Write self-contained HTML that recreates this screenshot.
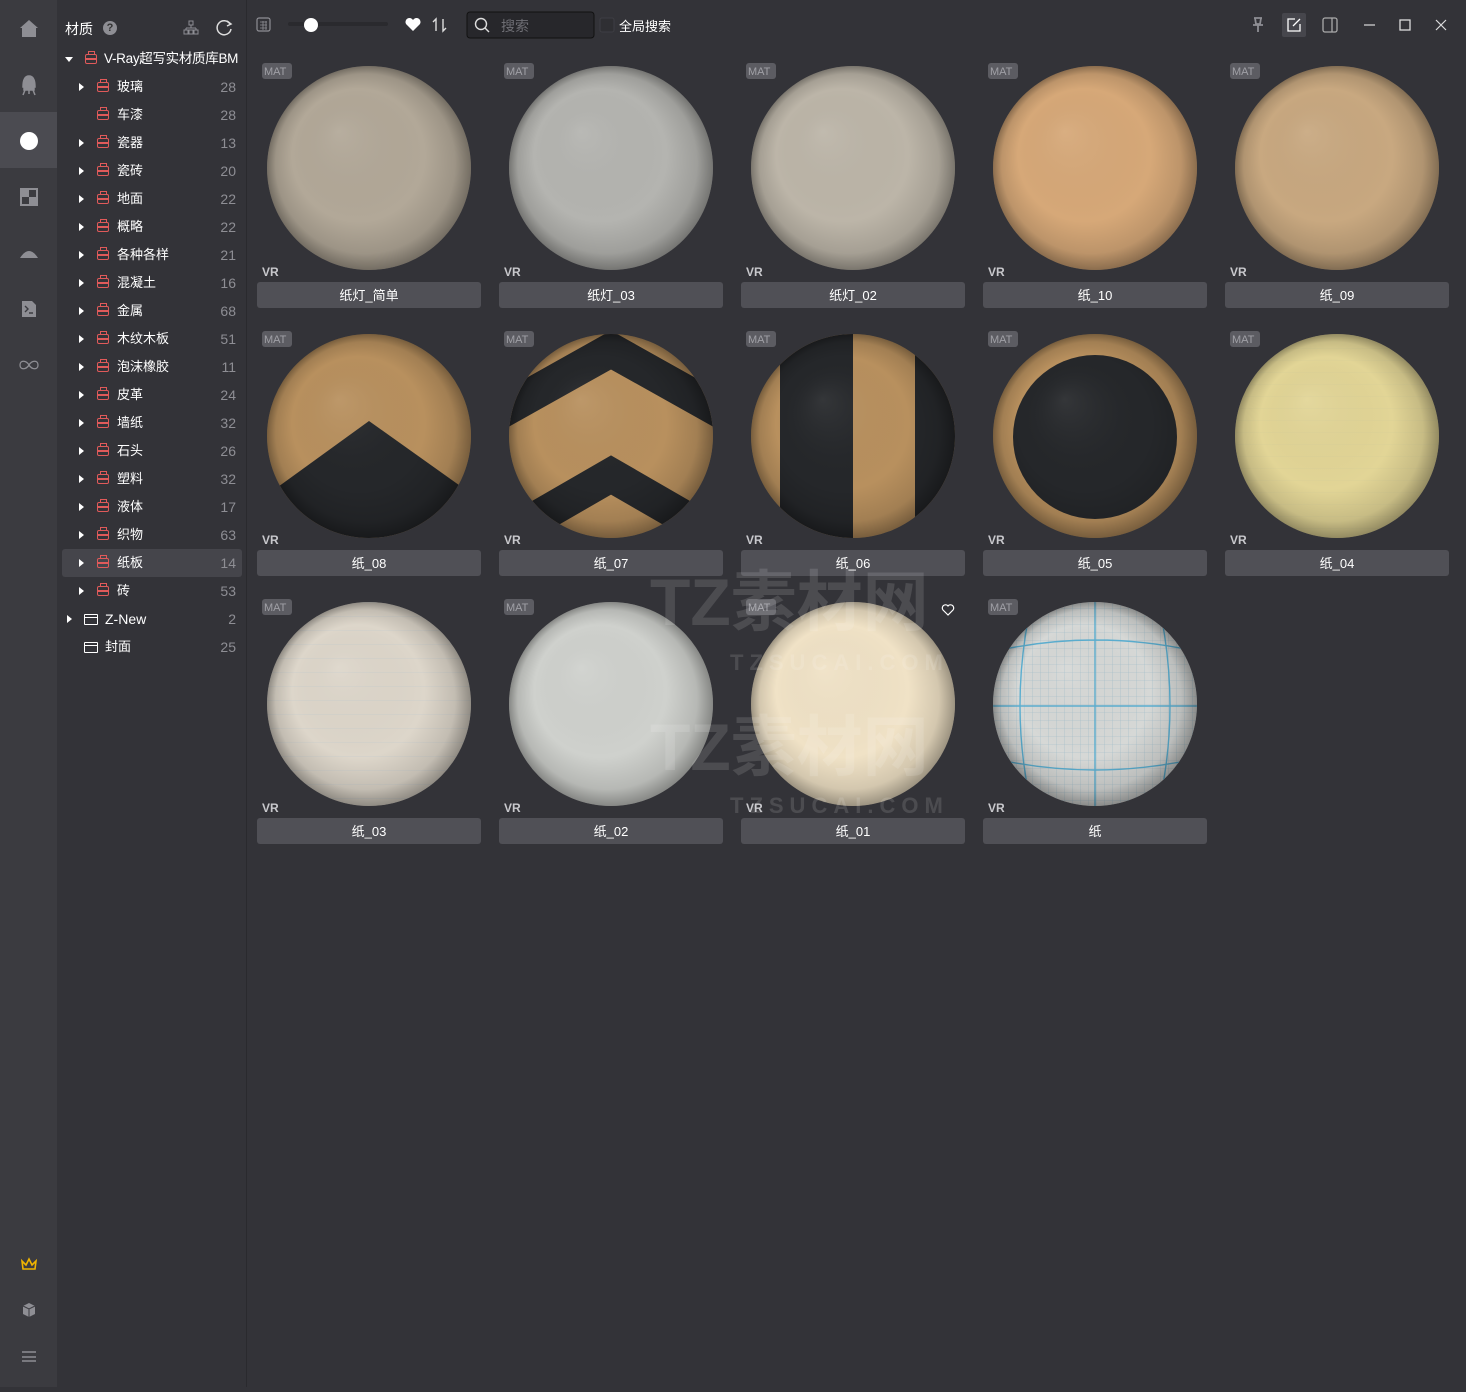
<!DOCTYPE html>
<html><head><meta charset="utf-8"><style>
*{margin:0;padding:0;box-sizing:border-box}
body{width:1466px;height:1387px;background:#333338;font-family:"Liberation Sans","Noto Sans CJK SC",sans-serif;overflow:hidden;position:relative;color:#fff}
#bar{position:absolute;left:0;top:0;width:57px;height:1387px;background:#3b3b40}
#side{position:absolute;left:57px;top:0;width:190px;height:1387px;background:#333338;border-right:1px solid #2a2a2e}
.row{position:absolute;left:5px;width:180px;height:28px;font-size:13px;line-height:28px;white-space:nowrap}
.row .a{position:absolute;left:17px;top:10px;width:0;height:0;border-left:5px solid #fff;border-top:4px solid transparent;border-bottom:4px solid transparent}
.row .ic{position:absolute;left:35px;top:9px;width:12px;height:10px;border:1.5px solid #e05a5a;border-radius:2px}
.row .ic:before{content:"";position:absolute;left:2px;top:-4px;width:5px;height:3px;border:1.5px solid #e05a5a;border-bottom:none}
.row .ic:after{content:"";position:absolute;left:-1px;top:3px;width:11px;height:1.5px;background:#e05a5a}
.row .t{position:absolute;left:55px;white-space:nowrap}
.row .n{position:absolute;right:6px;color:#8e8e94;font-size:14px}
.fold{position:absolute;left:22px;top:9px;width:14px;height:11px;border:1.3px solid #fff;border-radius:1px}
.fold:after{content:"";position:absolute;left:-1px;top:2px;width:14px;height:1.3px;background:#fff}
</style></head><body>
<div id="bar">
<svg width="57" height="1387" viewBox="0 0 57 1387">
<rect x="0" y="112" width="57" height="56" fill="#4b4b51"/>
<path d="M20 28 L29 20 L38 28 L36 28 L36 37 L22 37 L22 28Z" fill="#8e8e94"/>
<path d="M23 87 Q23 76 29 76 Q35 76 35 87 Z M24 88 L34 88 L34 90 L24 90Z M25 90 L23 95 M33 90 L35 95 M29 90 L29 94" fill="#8e8e94" stroke="#8e8e94" stroke-width="1.5"/>
<circle cx="29" cy="141" r="9" fill="#fff"/>
<rect x="21" y="189" width="16" height="16" fill="none" stroke="#8e8e94" stroke-width="2"/><rect x="22" y="190" width="7" height="7" fill="#8e8e94"/><rect x="29" y="197" width="7" height="7" fill="#8e8e94"/>
<path d="M20 258 Q29 244 38 258 Z" fill="#8e8e94"/>
<path d="M22 301 L32 301 L36 305 L36 317 L22 317Z" fill="#8e8e94"/><path d="M25 306 L28 309 L25 312 M29 313 L33 313" stroke="#3b3b40" stroke-width="1.4" fill="none"/>
<path d="M29 365 C26 360 20 360 20 365 C20 370 26 370 29 365 C32 360 38 360 38 365 C38 370 32 370 29 365Z" fill="none" stroke="#8e8e94" stroke-width="1.3"/>
<path d="M23 1269 L22 1261 L26 1265 L29 1259 L32 1265 L36 1261 L35 1269 Z" fill="none" stroke="#f0b400" stroke-width="1.6"/>
<path d="M29 1303 L35 1306 L35 1314 L29 1317 L23 1314 L23 1306Z" fill="#8e8e94"/><path d="M23 1306 L29 1309 L35 1306 M29 1309 L29 1317" stroke="#3b3b40" fill="none"/>
<path d="M22 1352 H36 M22 1357 H36 M22 1361 H36" stroke="#8e8e94" stroke-width="1.5"/>
</svg></div>
<div id="side">
<div style="position:absolute;left:8px;top:19px;font-size:14px">材质</div>
<div style="position:absolute;left:46px;top:21px;width:14px;height:14px;border-radius:7px;background:#8e8e94;color:#333;font-size:11px;font-weight:bold;text-align:center;line-height:14px">?</div>
<svg style="position:absolute;left:126px;top:19px" width="52" height="18"><path d="M6 2h4v4H6z M1 11h4v4H1z M6 11h4v4H6z M11 11h4v4H11z M8 6v3 M3 9h10 M3 9v2 M13 9v2" fill="none" stroke="#8e8e94" stroke-width="1"/><path d="M47 5 A7 7 0 1 0 48 10" fill="none" stroke="#ddd" stroke-width="1.5"/><path d="M44 2 L48 5 L44 7" fill="none" stroke="#ddd" stroke-width="1.5"/></svg>
<div class="row" style="top:45px;width:185px"><span style="position:absolute;left:3px;top:12px;border-top:5px solid #fff;border-left:4px solid transparent;border-right:4px solid transparent;width:0"></span><span class="ic" style="left:23px"></span><span class="t" style="left:42px;font-size:13.5px;letter-spacing:-0.3px">V-Ray超写实材质库BM</span></div>
<div class="row" style="top:73px"><span class="a"></span><span class="ic"></span><span class="t">玻璃</span><span class="n">28</span></div>
<div class="row" style="top:101px"><span class="ic"></span><span class="t">车漆</span><span class="n">28</span></div>
<div class="row" style="top:129px"><span class="a"></span><span class="ic"></span><span class="t">瓷器</span><span class="n">13</span></div>
<div class="row" style="top:157px"><span class="a"></span><span class="ic"></span><span class="t">瓷砖</span><span class="n">20</span></div>
<div class="row" style="top:185px"><span class="a"></span><span class="ic"></span><span class="t">地面</span><span class="n">22</span></div>
<div class="row" style="top:213px"><span class="a"></span><span class="ic"></span><span class="t">概略</span><span class="n">22</span></div>
<div class="row" style="top:241px"><span class="a"></span><span class="ic"></span><span class="t">各种各样</span><span class="n">21</span></div>
<div class="row" style="top:269px"><span class="a"></span><span class="ic"></span><span class="t">混凝土</span><span class="n">16</span></div>
<div class="row" style="top:297px"><span class="a"></span><span class="ic"></span><span class="t">金属</span><span class="n">68</span></div>
<div class="row" style="top:325px"><span class="a"></span><span class="ic"></span><span class="t">木纹木板</span><span class="n">51</span></div>
<div class="row" style="top:353px"><span class="a"></span><span class="ic"></span><span class="t">泡沫橡胶</span><span class="n">11</span></div>
<div class="row" style="top:381px"><span class="a"></span><span class="ic"></span><span class="t">皮革</span><span class="n">24</span></div>
<div class="row" style="top:409px"><span class="a"></span><span class="ic"></span><span class="t">墙纸</span><span class="n">32</span></div>
<div class="row" style="top:437px"><span class="a"></span><span class="ic"></span><span class="t">石头</span><span class="n">26</span></div>
<div class="row" style="top:465px"><span class="a"></span><span class="ic"></span><span class="t">塑料</span><span class="n">32</span></div>
<div class="row" style="top:493px"><span class="a"></span><span class="ic"></span><span class="t">液体</span><span class="n">17</span></div>
<div class="row" style="top:521px"><span class="a"></span><span class="ic"></span><span class="t">织物</span><span class="n">63</span></div>
<div class="row" style="top:549px;background:#45454b;border-radius:3px"><span class="a"></span><span class="ic"></span><span class="t">纸板</span><span class="n">14</span></div>
<div class="row" style="top:577px"><span class="a"></span><span class="ic"></span><span class="t">砖</span><span class="n">53</span></div>
<div class="row" style="top:605px"><span class="a" style="left:5px"></span><span class="fold"></span><span class="t" style="left:43px;font-size:14px">Z-New</span><span class="n">2</span></div>
<div class="row" style="top:633px"><span class="fold"></span><span class="t" style="left:43px">封面</span><span class="n">25</span></div>
</div>

<svg style="position:absolute;left:0;top:0" width="1466" height="1387" viewBox="0 0 1466 1387">
<defs>
<radialGradient id="sh" cx="0.5" cy="0.5" r="0.5" fx="0.35" fy="0.32">
<stop offset="0" stop-color="#fff" stop-opacity="0.07"/><stop offset="0.65" stop-color="#000" stop-opacity="0"/><stop offset="0.88" stop-color="#000" stop-opacity="0.12"/><stop offset="1" stop-color="#000" stop-opacity="0.35"/></radialGradient>
<pattern id="gp" width="8" height="8" patternUnits="userSpaceOnUse"><path d="M0 0H8M0 0V8" stroke="#8fb4c6" stroke-width="0.6"/></pattern>
<pattern id="lp" width="20" height="14" patternUnits="userSpaceOnUse"><path d="M0 0H20" stroke="#a9c0d0" stroke-width="0.6"/></pattern>
<pattern id="yp" width="20" height="12" patternUnits="userSpaceOnUse"><path d="M0 0H20" stroke="#c9c89a" stroke-width="0.6"/></pattern>
<clipPath id="c1"><circle cx="369" cy="436" r="102"/></clipPath>
<clipPath id="c2"><circle cx="611" cy="436" r="102"/></clipPath>
<clipPath id="c3"><circle cx="853" cy="436" r="102"/></clipPath>
<clipPath id="c4"><circle cx="1095" cy="436" r="102"/></clipPath>
<clipPath id="c5"><circle cx="369" cy="704" r="102"/></clipPath>
<clipPath id="c6"><circle cx="1095" cy="704" r="102"/></clipPath>
<clipPath id="c7"><circle cx="1337" cy="436" r="102"/></clipPath>
</defs>
<!-- toolbar -->
<rect x="257" y="18" width="13" height="13" rx="2" fill="none" stroke="#8e8e94" stroke-width="1.2"/><path d="M260 22h7M260 25h7M260 28h7M263 21v9M266 21v9" stroke="#8e8e94" stroke-width="0.8"/>
<rect x="288" y="22" width="100" height="4" rx="2" fill="#2a2a2e"/><circle cx="311" cy="25" r="7" fill="#fff"/>
<path d="M413 31 L406 24 A3.5 3.5 0 0 1 413 20 A3.5 3.5 0 0 1 420 24 Z" fill="#fff"/>
<path d="M436 31V19L433 22 M443 19V31L446 28" fill="none" stroke="#ddd" stroke-width="1.4"/>
<rect x="467" y="12" width="127" height="26" rx="3" fill="#27272b" stroke="#111" stroke-width="1"/>
<circle cx="481" cy="24" r="5.5" fill="none" stroke="#ddd" stroke-width="1.4"/><path d="M485 28L489 32" stroke="#ddd" stroke-width="1.4"/>
<text x="501" y="31" font-size="14" fill="#6e6e74">搜索</text>
<rect x="600" y="18" width="14" height="14" rx="2" fill="#2f2f33" stroke="#3e3e44"/>
<text x="619" y="31" font-size="13" fill="#fff">全局搜索</text>
<path d="M1254 18h8M1255 18l1 6h4l1-6M1253 25h10M1258 25v7" stroke="#8e8e94" stroke-width="1.8" fill="none"/>
<rect x="1282" y="13" width="24" height="24" rx="2" fill="#46464c"/>
<path d="M1295 19h-7v12h12v-7M1293 26l7-7" fill="none" stroke="#fff" stroke-width="1.3"/>
<rect x="1323" y="18" width="14" height="14" rx="2" fill="none" stroke="#aaa" stroke-width="1.3"/><path d="M1332 18v14" stroke="#aaa" stroke-width="1.3"/>
<path d="M1364 25h11" stroke="#ddd" stroke-width="1.2"/>
<rect x="1400" y="20" width="10" height="10" fill="none" stroke="#ddd" stroke-width="1.3"/>
<path d="M1436 20l10 10M1446 20l-10 10" stroke="#ddd" stroke-width="1.2"/>

<!-- row1 -->
<circle cx="369" cy="168" r="102" fill="#b2a898"/>
<circle cx="611" cy="168" r="102" fill="#b4b4b0"/>
<circle cx="853" cy="168" r="102" fill="#bcb5a8"/>
<circle cx="1095" cy="168" r="102" fill="#d6a878"/>
<circle cx="1337" cy="168" r="102" fill="#c8a880"/>
<!-- row2 -->
<circle cx="369" cy="436" r="102" fill="#b8905e"/>
<g clip-path="url(#c1)" fill="#25272a"><polygon points="260,500 369,421 480,500 480,545 260,545"/></g>
<circle cx="611" cy="436" r="102" fill="#b8905e"/>
<g clip-path="url(#c2)" fill="none" stroke="#25272a"><polyline points="495,415 611,350 727,415" stroke-width="34"/><polyline points="495,542 611,475 727,542" stroke-width="34"/></g>
<circle cx="853" cy="436" r="102" fill="#b8905e"/>
<g clip-path="url(#c3)" fill="#25272a"><rect x="780" y="330" width="73" height="212"/><rect x="915" y="330" width="45" height="212"/></g>
<circle cx="1095" cy="436" r="102" fill="#b8905e"/>
<circle cx="1095" cy="437" r="82" fill="#25272a"/>
<circle cx="1337" cy="436" r="102" fill="#e2d596"/>
<rect x="1230" y="330" width="215" height="212" fill="url(#yp)" clip-path="url(#c7)" opacity="0.6"/>
<!-- row3 -->
<circle cx="369" cy="704" r="102" fill="#ddd6ca"/>
<rect x="262" y="598" width="215" height="212" fill="url(#lp)" clip-path="url(#c5)" opacity="0.6"/>
<circle cx="611" cy="704" r="102" fill="#cfd1cd"/>
<circle cx="853" cy="704" r="102" fill="#f0e2c6"/>
<circle cx="1095" cy="704" r="102" fill="#d6d8d6"/>
<g clip-path="url(#c6)"><rect x="990" y="598" width="215" height="212" fill="url(#gp)" opacity="0.8"/>
<path d="M1095 600V810M990 706H1200M1030 610Q1010 706 1030 800M1160 610Q1180 706 1160 800M1000 650Q1095 630 1190 650M1000 760Q1095 780 1190 760" stroke="#5aaed0" stroke-width="1.4" fill="none"/></g>
<g fill="url(#sh)">
<circle cx="369" cy="168" r="102"/><circle cx="611" cy="168" r="102"/><circle cx="853" cy="168" r="102"/><circle cx="1095" cy="168" r="102"/><circle cx="1337" cy="168" r="102"/>
<circle cx="369" cy="436" r="102"/><circle cx="611" cy="436" r="102"/><circle cx="853" cy="436" r="102"/><circle cx="1095" cy="436" r="102"/><circle cx="1337" cy="436" r="102"/>
<circle cx="369" cy="704" r="102"/><circle cx="611" cy="704" r="102"/><circle cx="853" cy="704" r="102"/><circle cx="1095" cy="704" r="102"/>
</g>
<!-- labels -->
<g font-size="11" fill="#a0a0a6">
<rect x="262" y="63" width="30" height="16" rx="3" fill="#5c5c62"/>
<rect x="504" y="63" width="30" height="16" rx="3" fill="#5c5c62"/><rect x="746" y="63" width="30" height="16" rx="3" fill="#5c5c62"/><rect x="988" y="63" width="30" height="16" rx="3" fill="#5c5c62"/><rect x="1230" y="63" width="30" height="16" rx="3" fill="#5c5c62"/>
<rect x="262" y="331" width="30" height="16" rx="3" fill="#5c5c62"/><rect x="504" y="331" width="30" height="16" rx="3" fill="#5c5c62"/><rect x="746" y="331" width="30" height="16" rx="3" fill="#5c5c62"/><rect x="988" y="331" width="30" height="16" rx="3" fill="#5c5c62"/><rect x="1230" y="331" width="30" height="16" rx="3" fill="#5c5c62"/>
<rect x="262" y="599" width="30" height="16" rx="3" fill="#5c5c62"/><rect x="504" y="599" width="30" height="16" rx="3" fill="#5c5c62"/><rect x="746" y="599" width="30" height="16" rx="3" fill="#5c5c62"/><rect x="988" y="599" width="30" height="16" rx="3" fill="#5c5c62"/>
<text x="264" y="75">MAT</text><text x="506" y="75">MAT</text><text x="748" y="75">MAT</text><text x="990" y="75">MAT</text><text x="1232" y="75">MAT</text>
<text x="264" y="343">MAT</text><text x="506" y="343">MAT</text><text x="748" y="343">MAT</text><text x="990" y="343">MAT</text><text x="1232" y="343">MAT</text>
<text x="264" y="611">MAT</text><text x="506" y="611">MAT</text><text x="748" y="611">MAT</text><text x="990" y="611">MAT</text>
</g>
<g font-size="12" font-weight="bold" fill="#c8c8cc">
<text x="262" y="276">VR</text><text x="504" y="276">VR</text><text x="746" y="276">VR</text><text x="988" y="276">VR</text><text x="1230" y="276">VR</text>
<text x="262" y="544">VR</text><text x="504" y="544">VR</text><text x="746" y="544">VR</text><text x="988" y="544">VR</text><text x="1230" y="544">VR</text>
<text x="262" y="812">VR</text><text x="504" y="812">VR</text><text x="746" y="812">VR</text><text x="988" y="812">VR</text>
</g>
<g fill="#505056">
<rect x="257" y="282" width="224" height="26" rx="3"/><rect x="499" y="282" width="224" height="26" rx="3"/><rect x="741" y="282" width="224" height="26" rx="3"/><rect x="983" y="282" width="224" height="26" rx="3"/><rect x="1225" y="282" width="224" height="26" rx="3"/>
<rect x="257" y="550" width="224" height="26" rx="3"/><rect x="499" y="550" width="224" height="26" rx="3"/><rect x="741" y="550" width="224" height="26" rx="3"/><rect x="983" y="550" width="224" height="26" rx="3"/><rect x="1225" y="550" width="224" height="26" rx="3"/>
<rect x="257" y="818" width="224" height="26" rx="3"/><rect x="499" y="818" width="224" height="26" rx="3"/><rect x="741" y="818" width="224" height="26" rx="3"/><rect x="983" y="818" width="224" height="26" rx="3"/>
</g>
<g font-size="13" fill="#fff" text-anchor="middle">
<text x="369" y="300">纸灯_简单</text><text x="611" y="300">纸灯_03</text><text x="853" y="300">纸灯_02</text><text x="1095" y="300">纸_10</text><text x="1337" y="300">纸_09</text>
<text x="369" y="568">纸_08</text><text x="611" y="568">纸_07</text><text x="853" y="568">纸_06</text><text x="1095" y="568">纸_05</text><text x="1337" y="568">纸_04</text>
<text x="369" y="836">纸_03</text><text x="611" y="836">纸_02</text><text x="853" y="836">纸_01</text><text x="1095" y="836">纸</text>
</g>
<path d="M948 615 L943 610 A2.8 2.8 0 0 1 948 606 A2.8 2.8 0 0 1 953 610 Z" fill="none" stroke="#fff" stroke-width="1.2"/>
<g fill="#fff" opacity="0.12" font-weight="bold">
<text x="650" y="625" font-size="66">TZ素材网</text><text x="730" y="670" font-size="22" letter-spacing="6">TZSUCAI.COM</text>
<text x="650" y="770" font-size="66">TZ素材网</text><text x="730" y="813" font-size="22" letter-spacing="6">TZSUCAI.COM</text>
</g>
</svg>
</body></html>
